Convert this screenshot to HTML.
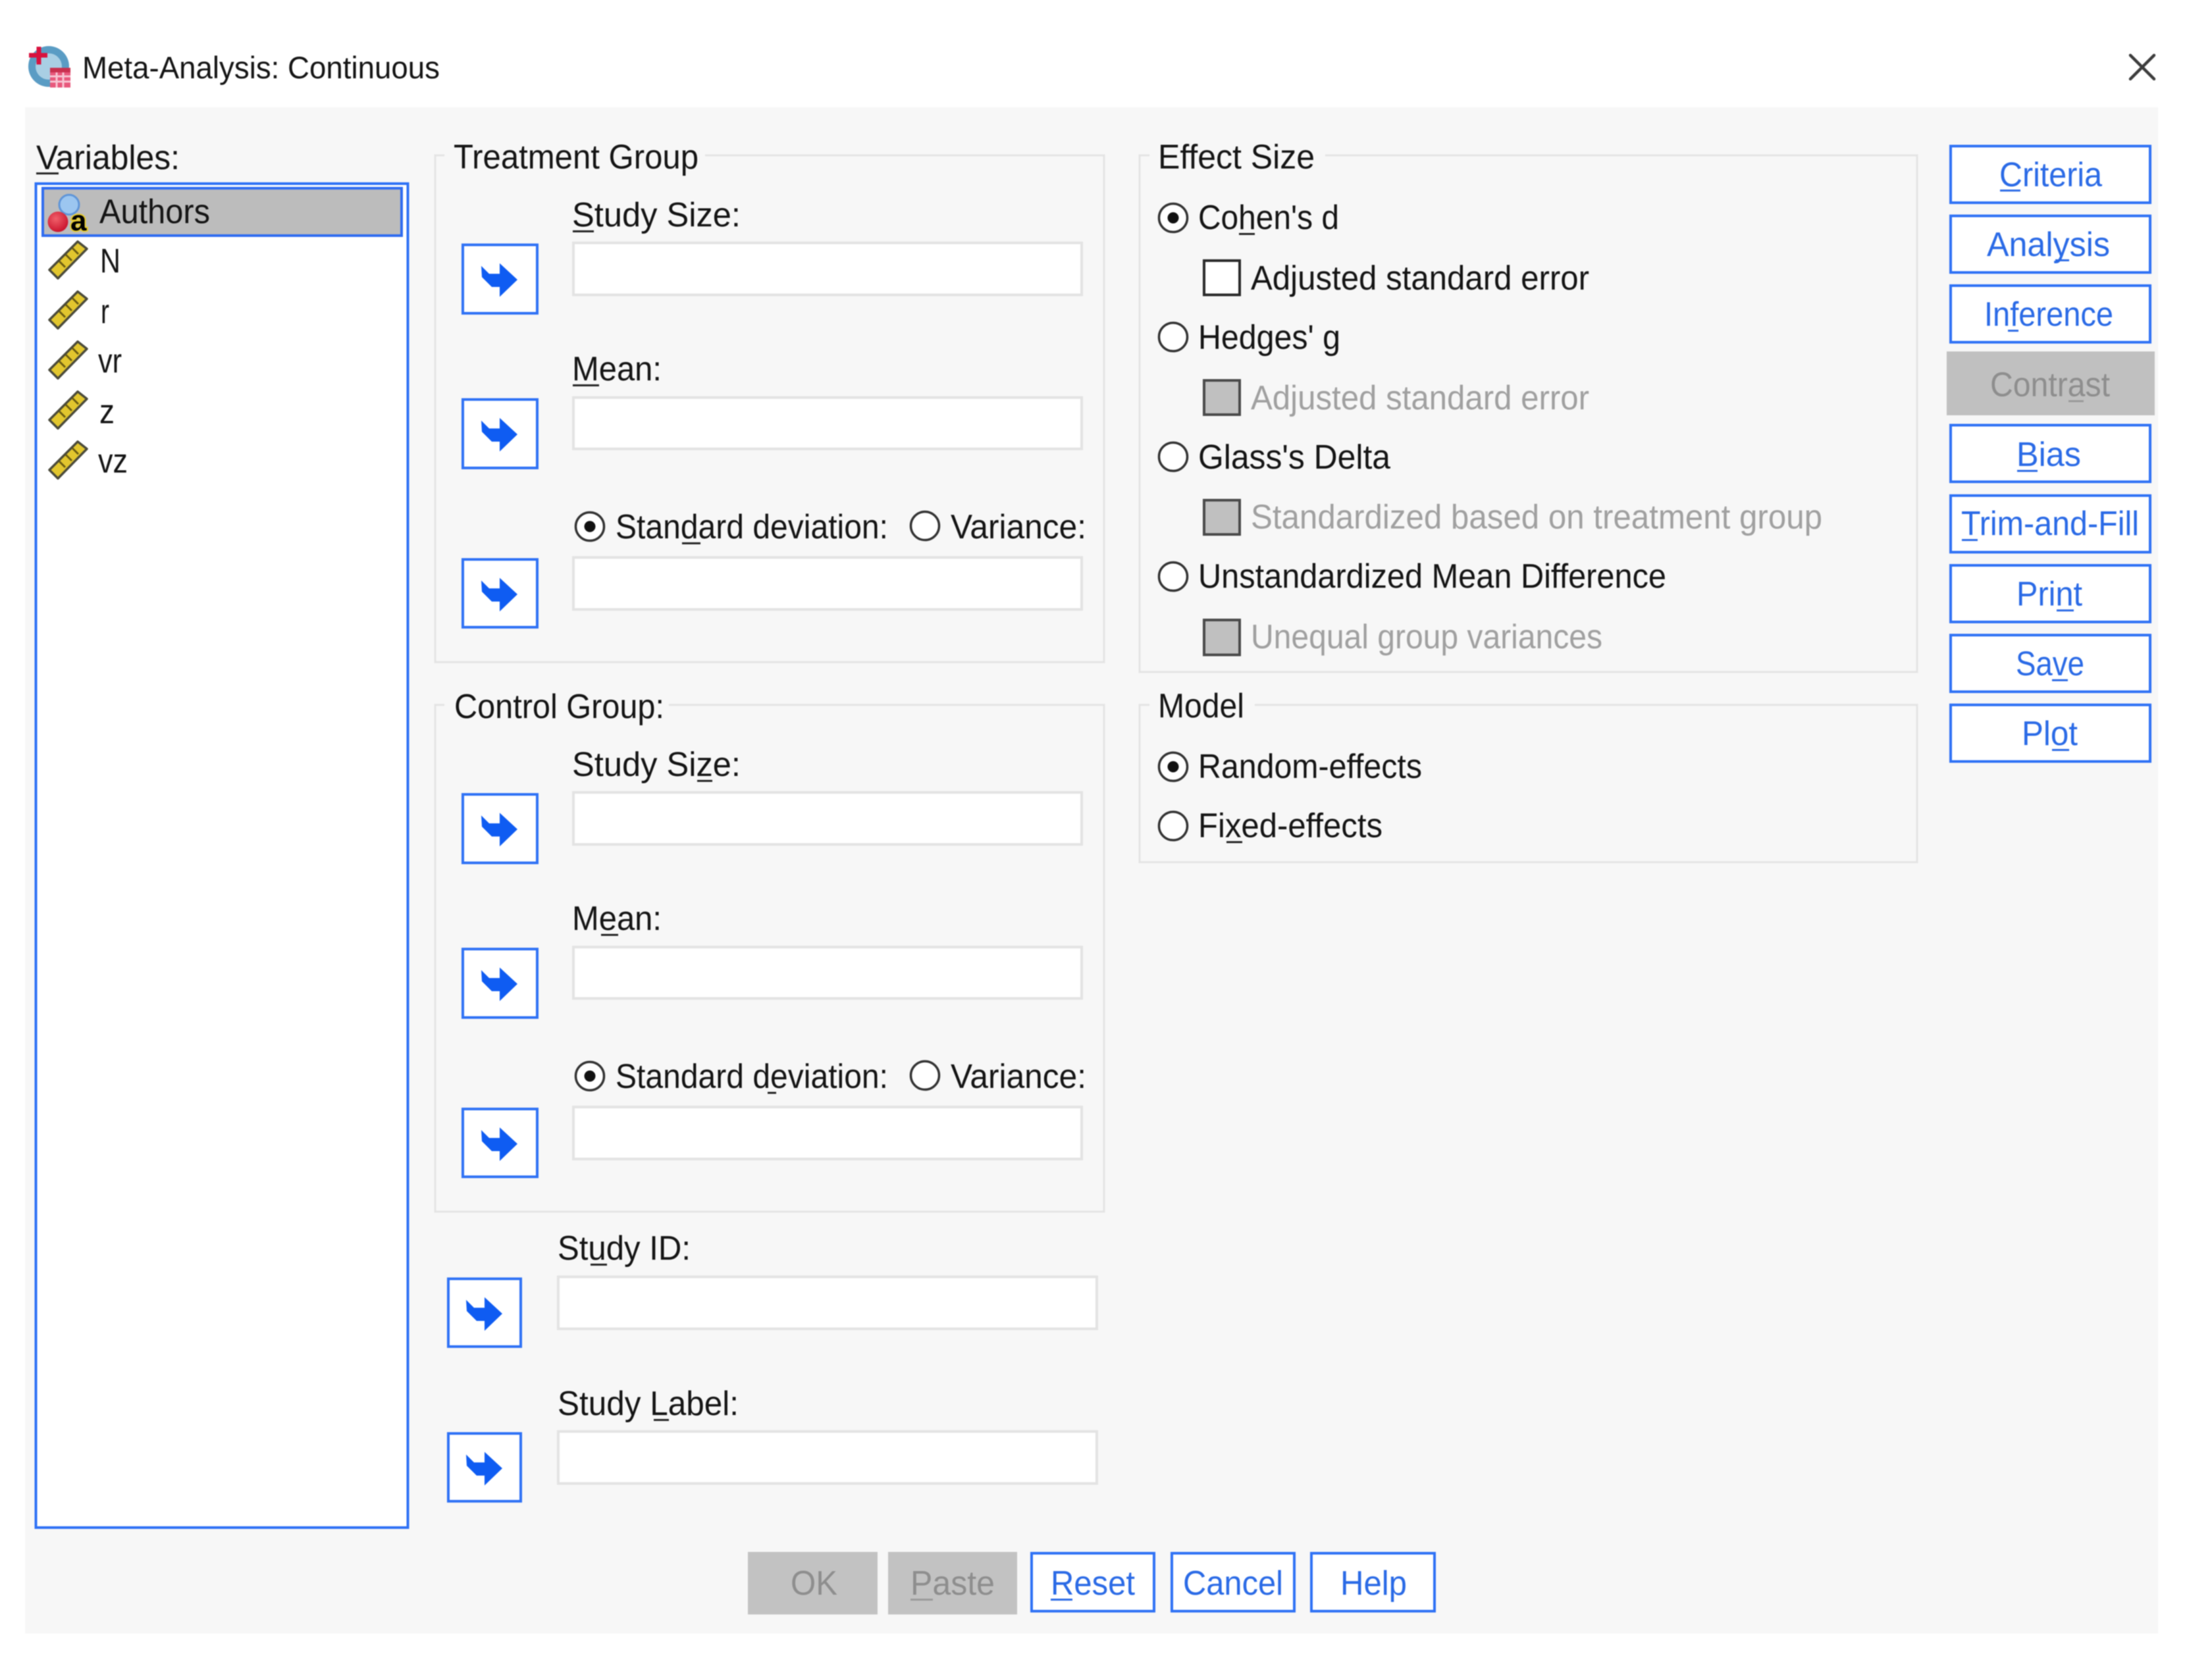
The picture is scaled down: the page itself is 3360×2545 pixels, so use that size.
<!DOCTYPE html>
<html lang="en">
<head>
<meta charset="utf-8">
<title>Meta-Analysis: Continuous</title>
<style>
html,body{margin:0;padding:0;background:#fff;width:3360px;height:2545px;overflow:hidden}
svg{display:block;filter:blur(.9px)}
text{font-family:"Liberation Sans",Arial,sans-serif;font-size:52px;fill:#141414}
.t{font-size:47px}
.g{fill:#a0a0a0}
.d{fill:#8e8e8e}
.b{fill:#2a6ae6}
.fs{fill:none;stroke:#e4e4e4;stroke-width:3}
.in{fill:#fff;stroke:#e3e3e3;stroke-width:4}
.ab{fill:#fff;stroke:#2f72f5;stroke-width:4}
.ar{fill:#0f5cf2}
.bt{fill:#fff;stroke:#2f72f5;stroke-width:4}
.rd{fill:#fff;stroke:#333;stroke-width:3.5}
.cb{fill:#fff;stroke:#2a2a2a;stroke-width:4}
.cg{fill:#c0c0c0;stroke:#4a4a4a;stroke-width:4}
.ul{fill:#222}
.ug{fill:#9a9a9a}
.ub{fill:#2a6ae6}
.rl{fill:#e2c62e;stroke:#4a4a3a;stroke-width:3.5;stroke-linejoin:round}
.tk{stroke:#6b5d12;stroke-width:3}
</style>
</head>
<body>
<svg xmlns="http://www.w3.org/2000/svg" width="3360" height="2545" viewBox="0 0 3360 2545">
<defs>
<radialGradient id="red" cx=".4" cy=".35" r=".7"><stop offset="0" stop-color="#f0606a"/><stop offset="1" stop-color="#c8102a"/></radialGradient>
<g id="arrow"><path class="ar" d="M28 33L40 45H56V29L83 54L56 80V65H44L29 50Z"/></g>
<g id="rul">
<path class="rl" d="M14 -27L28 -16L-16 29L-29 16Z"/>
<path class="tk" d="M-14 3L-5 12M-4 -7L5 2M6 -17L15 -8" fill="none"/>
</g>
</defs>

<rect width="3360" height="2545" fill="#fff"/>
<rect x="38" y="163" width="3240" height="2319" fill="#f7f7f7"/>

<!-- title bar -->
<circle cx="74" cy="101" r="31" fill="#5a9cc4"/>
<circle cx="74" cy="101" r="20" fill="#a9cfe4"/>
<rect x="76" y="104" width="31" height="29" fill="#e8587c"/>
<path d="M76 116H107M76 124H107M86 106V133M96 106V133" stroke="#f7c4d2" stroke-width="3" fill="none"/>
<rect x="76" y="103" width="31" height="7" fill="#c9304f"/>
<path d="M44 84H72M59 71V98" stroke="#d8123f" stroke-width="7" fill="none"/>
<text class="t" x="125" y="119" textLength="543" lengthAdjust="spacingAndGlyphs">Meta-Analysis: Continuous</text>
<path d="M3236 84L3272 120M3272 84L3236 120" stroke="#3c3c3c" stroke-width="4.5" stroke-linecap="round"/>

<!-- variables -->
<text x="55" y="257" textLength="218" lengthAdjust="spacingAndGlyphs">Variables:</text>
<rect class="ul" x="55" y="262" width="34" height="3"/>
<rect x="54.5" y="279" width="565" height="2042" fill="#fff" stroke="#2f72f5" stroke-width="4"/>
<rect x="65" y="286" width="545" height="72" fill="#bcbcbc" stroke="#2f6cf0" stroke-width="4"/>
<circle cx="105" cy="311" r="15" fill="#9cc6f0" stroke="#5f95d8" stroke-width="3"/>
<circle cx="88" cy="337" r="15.5" fill="url(#red)"/>
<text x="107" y="350" style="font-size:44px;font-weight:bold;fill:#000;stroke:#e8cd2c;stroke-width:4;paint-order:stroke">a</text>
<text x="151" y="339" textLength="168" lengthAdjust="spacingAndGlyphs">Authors</text>
<use href="#rul" x="104" y="394"/>
<use href="#rul" x="104" y="470"/>
<use href="#rul" x="104" y="546"/>
<use href="#rul" x="104" y="622"/>
<use href="#rul" x="104" y="698"/>
<text x="152" y="414" textLength="31" lengthAdjust="spacingAndGlyphs">N</text>
<text x="153" y="491" textLength="13" lengthAdjust="spacingAndGlyphs">r</text>
<text x="149" y="566" textLength="36" lengthAdjust="spacingAndGlyphs">vr</text>
<text x="151" y="643" textLength="23" lengthAdjust="spacingAndGlyphs">z</text>
<text x="149" y="718" textLength="45" lengthAdjust="spacingAndGlyphs">vz</text>

<!-- Treatment group -->
<path class="fs" d="M675 236H661V1006H1677V236H1071"/>
<text x="689" y="256" textLength="372" lengthAdjust="spacingAndGlyphs">Treatment Group</text>
<text x="869" y="344" textLength="256" lengthAdjust="spacingAndGlyphs">Study Size:</text>
<rect class="ul" x="870" y="350" width="32" height="3"/>
<rect class="in" x="871" y="369" width="772" height="79"/>
<rect class="ab" x="703" y="372" width="113" height="104"/>
<use href="#arrow" x="703" y="371"/>
<text x="869" y="578" textLength="136" lengthAdjust="spacingAndGlyphs">Mean:</text>
<rect class="ul" x="870" y="584" width="40" height="3"/>
<rect class="in" x="871" y="604" width="772" height="78"/>
<rect class="ab" x="703" y="607" width="113" height="104"/>
<use href="#arrow" x="703" y="606"/>
<circle class="rd" cx="896" cy="800" r="21.5"/><circle cx="896" cy="800" r="8.5" fill="#111"/>
<text x="935" y="818" textLength="414" lengthAdjust="spacingAndGlyphs">Standard deviation:</text>
<rect class="ul" x="1036" y="824" width="28" height="3"/>
<circle class="rd" cx="1405" cy="799" r="21.5"/>
<text x="1444" y="818" textLength="206" lengthAdjust="spacingAndGlyphs">Variance:</text>
<rect class="in" x="871" y="847" width="772" height="79"/>
<rect class="ab" x="703" y="850" width="113" height="103"/>
<use href="#arrow" x="703" y="849"/>

<!-- Control group -->
<path class="fs" d="M675 1071H661V1841H1677V1071H1016"/>
<text x="690" y="1091" textLength="319" lengthAdjust="spacingAndGlyphs">Control Group:</text>
<text x="869" y="1179" textLength="256" lengthAdjust="spacingAndGlyphs">Study Size:</text>
<rect class="ul" x="1059" y="1185" width="23" height="3"/>
<rect class="in" x="871" y="1204" width="772" height="79"/>
<rect class="ab" x="703" y="1207" width="113" height="104"/>
<use href="#arrow" x="703" y="1206"/>
<text x="869" y="1413" textLength="136" lengthAdjust="spacingAndGlyphs">Mean:</text>
<rect class="ul" x="913" y="1419" width="26" height="3"/>
<rect class="in" x="871" y="1439" width="772" height="78"/>
<rect class="ab" x="703" y="1442" width="113" height="104"/>
<use href="#arrow" x="703" y="1441"/>
<circle class="rd" cx="896" cy="1635" r="21.5"/><circle cx="896" cy="1635" r="8.5" fill="#111"/>
<text x="935" y="1653" textLength="414" lengthAdjust="spacingAndGlyphs">Standard deviation:</text>
<rect class="ul" x="1166" y="1659" width="13" height="3"/>
<circle class="rd" cx="1405" cy="1634" r="21.5"/>
<text x="1444" y="1653" textLength="206" lengthAdjust="spacingAndGlyphs">Variance:</text>
<rect class="in" x="871" y="1682" width="772" height="79"/>
<rect class="ab" x="703" y="1685" width="113" height="103"/>
<use href="#arrow" x="703" y="1684"/>

<!-- Study ID / Label -->
<text x="847" y="1914" textLength="202" lengthAdjust="spacingAndGlyphs">Study ID:</text>
<rect class="ul" x="897" y="1920" width="25" height="3"/>
<rect class="in" x="848" y="1940" width="818" height="79"/>
<rect class="ab" x="681" y="1943" width="110" height="103"/>
<use href="#arrow" x="680" y="1942"/>
<text x="847" y="2150" textLength="275" lengthAdjust="spacingAndGlyphs">Study Label:</text>
<rect class="ul" x="993" y="2156" width="23" height="3"/>
<rect class="in" x="848" y="2175" width="818" height="79"/>
<rect class="ab" x="681" y="2178" width="110" height="103"/>
<use href="#arrow" x="680" y="2177"/>

<!-- Effect size -->
<path class="fs" d="M1746 236H1731V1021H2912V236H2013"/>
<text x="1759" y="256" textLength="238" lengthAdjust="spacingAndGlyphs">Effect Size</text>
<circle class="rd" cx="1782" cy="331" r="21.5"/><circle cx="1782" cy="331" r="8.5" fill="#111"/>
<text x="1820" y="348" textLength="214" lengthAdjust="spacingAndGlyphs">Cohen's d</text>
<rect class="ul" x="1882" y="354" width="24" height="3"/>
<rect class="cb" x="1829" y="396" width="54" height="52"/>
<text x="1900" y="440" textLength="514" lengthAdjust="spacingAndGlyphs">Adjusted standard error</text>
<circle class="rd" cx="1782" cy="512" r="21.5"/>
<text x="1820" y="530" textLength="216" lengthAdjust="spacingAndGlyphs">Hedges' g</text>
<rect class="cg" x="1829" y="578" width="54" height="52"/>
<text class="g" x="1900" y="622" textLength="514" lengthAdjust="spacingAndGlyphs">Adjusted standard error</text>
<circle class="rd" cx="1782" cy="694" r="21.5"/>
<text x="1820" y="712" textLength="292" lengthAdjust="spacingAndGlyphs">Glass's Delta</text>
<rect class="cg" x="1829" y="760" width="54" height="52"/>
<text class="g" x="1900" y="803" textLength="868" lengthAdjust="spacingAndGlyphs">Standardized based on treatment group</text>
<circle class="rd" cx="1782" cy="876" r="21.5"/>
<text x="1820" y="893" textLength="711" lengthAdjust="spacingAndGlyphs">Unstandardized Mean Difference</text>
<rect class="cg" x="1829" y="942" width="54" height="53"/>
<text class="g" x="1900" y="985" textLength="534" lengthAdjust="spacingAndGlyphs">Unequal group variances</text>

<!-- Model -->
<path class="fs" d="M1746 1071H1731V1310H2912V1071H1906"/>
<text x="1759" y="1090" textLength="131" lengthAdjust="spacingAndGlyphs">Model</text>
<circle class="rd" cx="1782" cy="1165" r="21.5"/><circle cx="1782" cy="1165" r="8.5" fill="#111"/>
<text x="1820" y="1182" textLength="340" lengthAdjust="spacingAndGlyphs">Random-effects</text>
<circle class="rd" cx="1782" cy="1255" r="21.5"/>
<text x="1820" y="1272" textLength="280" lengthAdjust="spacingAndGlyphs">Fixed-effects</text>
<rect class="ul" x="1863" y="1278" width="24" height="3"/>

<!-- right buttons -->
<rect class="bt" x="2963" y="222" width="303" height="86"/>
<text class="b" x="3037" y="283" textLength="156" lengthAdjust="spacingAndGlyphs">Criteria</text>
<rect class="ub" x="3038" y="288" width="31" height="3"/>
<rect class="bt" x="2963" y="328" width="303" height="86"/>
<text class="b" x="3018" y="389" textLength="187" lengthAdjust="spacingAndGlyphs">Analysis</text>
<rect class="ub" x="3122" y="394" width="21" height="3"/>
<rect class="bt" x="2963" y="434" width="303" height="86"/>
<text class="b" x="3014" y="495" textLength="196" lengthAdjust="spacingAndGlyphs">Inference</text>
<rect class="ub" x="3050" y="501" width="16" height="3"/>
<rect x="2957" y="534" width="316" height="97" fill="#c0c0c0"/>
<text class="d" x="3023" y="602" textLength="182" lengthAdjust="spacingAndGlyphs">Contrast</text>
<rect class="ug" x="3142" y="608" width="23" height="3"/>
<rect class="bt" x="2963" y="646" width="303" height="86"/>
<text class="b" x="3063" y="708" textLength="98" lengthAdjust="spacingAndGlyphs">Bias</text>
<rect class="ub" x="3064" y="714" width="31" height="3"/>
<rect class="bt" x="2963" y="753" width="303" height="86"/>
<text class="b" x="2979" y="813" textLength="270" lengthAdjust="spacingAndGlyphs">Trim-and-Fill</text>
<rect class="ub" x="2980" y="819" width="24" height="3"/>
<rect class="bt" x="2963" y="859" width="303" height="86"/>
<text class="b" x="3063" y="920" textLength="100" lengthAdjust="spacingAndGlyphs">Print</text>
<rect class="ub" x="3124" y="926" width="26" height="3"/>
<rect class="bt" x="2963" y="965" width="303" height="86"/>
<text class="b" x="3062" y="1026" textLength="104" lengthAdjust="spacingAndGlyphs">Save</text>
<rect class="ub" x="3117" y="1032" width="24" height="3"/>
<rect class="bt" x="2963" y="1071" width="303" height="86"/>
<text class="b" x="3071" y="1132" textLength="85" lengthAdjust="spacingAndGlyphs">Plot</text>
<rect class="ub" x="3117" y="1138" width="26" height="3"/>

<!-- bottom buttons -->
<rect x="1136" y="2358" width="197" height="95" fill="#c2c2c2"/>
<text class="d" x="1201" y="2423" textLength="71" lengthAdjust="spacingAndGlyphs">OK</text>
<rect x="1349" y="2358" width="196" height="95" fill="#c2c2c2"/>
<text class="d" x="1383" y="2423" textLength="128" lengthAdjust="spacingAndGlyphs">Paste</text>
<rect class="ug" x="1383" y="2429" width="34" height="3"/>
<rect class="bt" x="1567" y="2360" width="186" height="88"/>
<text class="b" x="1596" y="2423" textLength="128" lengthAdjust="spacingAndGlyphs">Reset</text>
<rect class="ub" x="1596" y="2429" width="33" height="3"/>
<rect class="bt" x="1780" y="2360" width="186" height="88"/>
<text class="b" x="1797" y="2423" textLength="152" lengthAdjust="spacingAndGlyphs">Cancel</text>
<rect class="bt" x="1992" y="2360" width="187" height="88"/>
<text class="b" x="2036" y="2423" textLength="101" lengthAdjust="spacingAndGlyphs">Help</text>
</svg>
</body>
</html>
